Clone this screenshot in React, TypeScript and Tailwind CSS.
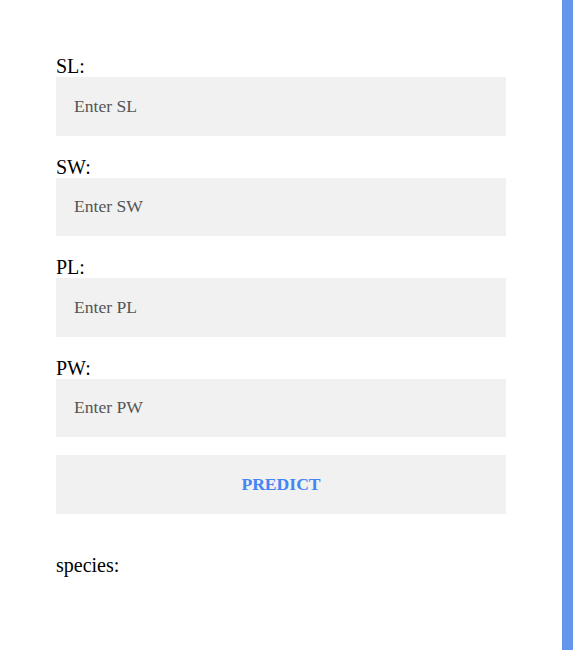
const FIELDS = ['SL', 'SW', 'PL', 'PW']

export default function App() {
  return (
    <div className="flex h-[650px] w-full bg-white" style={{ fontFamily: '"Liberation Serif", "Times New Roman", serif' }}>
      <div className="flex-1">
        <form className="ml-[56px] w-[450px] pt-[55px]" onSubmit={(e) => e.preventDefault()}>
          <div className="flex flex-col gap-[20px]">
            {FIELDS.map((f) => (
              <div key={f} className="flex flex-col">
                <label className="block text-[20px] leading-[22px] text-black">{f}:</label>
                <input
                  type="text"
                  placeholder={`Enter ${f}`}
                  className="h-[58.5px] w-full bg-[#f1f1f1] px-[18px] text-[17.6px] text-black outline-none placeholder:text-[#555]"
                />
              </div>
            ))}
          </div>
          <button
            type="submit"
            className="mt-[18px] h-[58.5px] w-full bg-[#f1f1f1] text-[17.6px] font-bold text-[#4285f4]"
          >
            PREDICT
          </button>
        </form>
        <p className="ml-[56px] mt-[40px] text-[20px] leading-[22px] text-black">species:</p>
      </div>
      <div className="w-[11px] bg-[#6495ed]" />
    </div>
  )
}
